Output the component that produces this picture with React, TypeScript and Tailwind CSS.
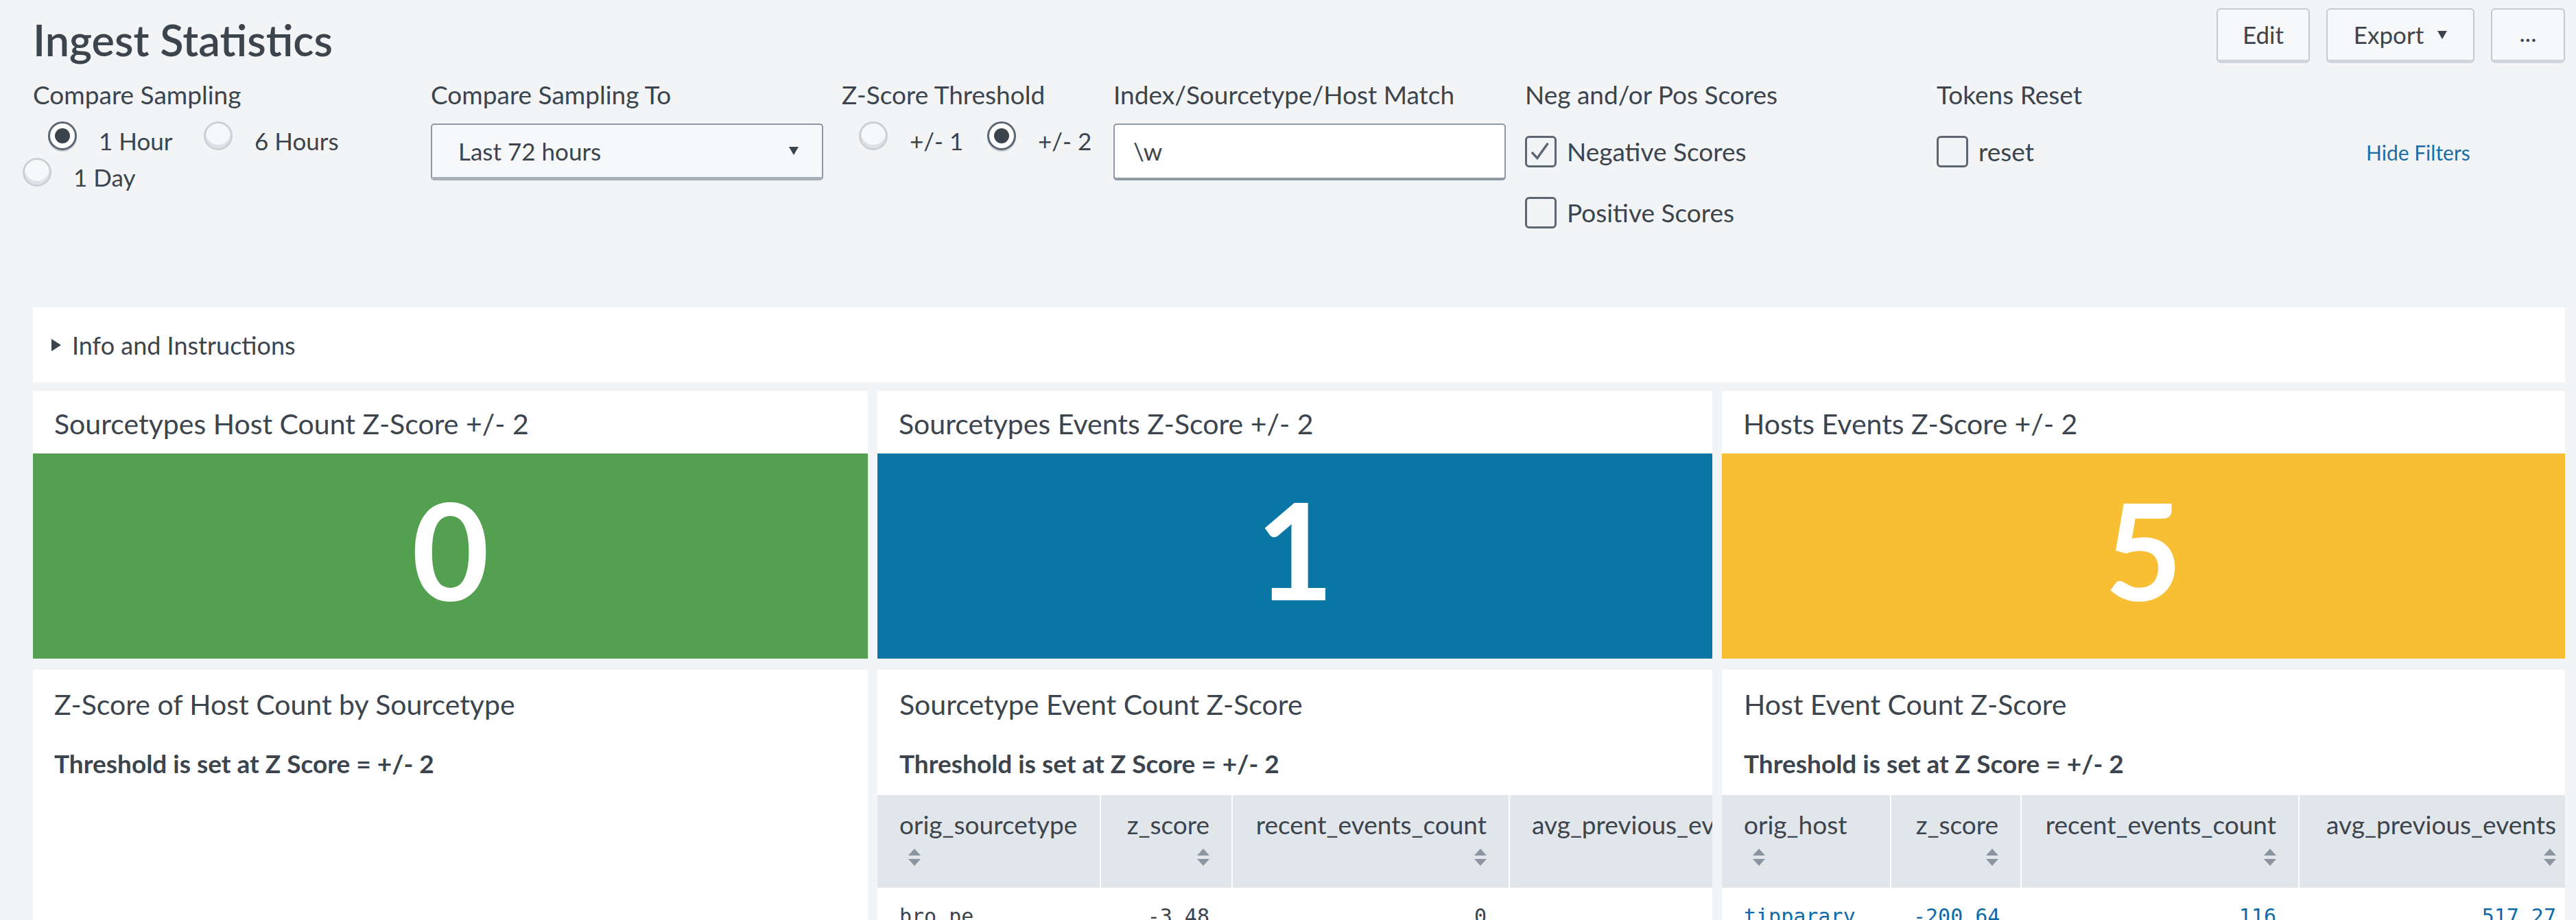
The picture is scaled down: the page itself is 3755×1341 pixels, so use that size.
import React from "react";

const Caret = ({ className = "" }: { className?: string }) => (
  <svg viewBox="0 0 14 12" className={`h-[12px] w-[14px] ${className}`}>
    <path d="M0 0 L14 0 L7 12 Z" fill="#3c444d" />
  </svg>
);

const SortIcon = () => (
  <svg viewBox="0 0 18 26" className="h-[26px] w-[18px]">
    <path d="M9 0 L18 10 L0 10 Z" fill="#8a95a1" />
    <path d="M0 15 L18 15 L9 25 Z" fill="#8a95a1" />
  </svg>
);

const Radio = ({ checked }: { checked?: boolean }) =>
  checked ? (
    <span className="flex h-[42px] w-[42px] shrink-0 items-center justify-center rounded-full border-[3px] border-[#5c6773] bg-white shadow-[0_2px_0_#c3cbd4]">
      <span className="h-[22px] w-[22px] rounded-full bg-[#3c444d]" />
    </span>
  ) : (
    <span className="h-[42px] w-[42px] shrink-0 rounded-full border-[3px] border-[#c9d0d8] bg-[#f7f8fa] shadow-[inset_0_-5px_0_#dde2e7]" />
  );

const RadioItem = ({
  label,
  checked,
  className = "",
}: {
  label: string;
  checked?: boolean;
  className?: string;
}) => (
  <div className={`flex items-start ${className}`}>
    <Radio checked={checked} />
    <span className="ml-[32px] mt-[8px] text-[35px] leading-[40px]">{label}</span>
  </div>
);

const Checkbox = ({ label, checked }: { label: string; checked?: boolean }) => (
  <div className="flex items-center">
    <span className="flex h-[46px] w-[46px] shrink-0 items-center justify-center rounded-[6px] border-[3px] border-[#5c6773] bg-transparent">
      {checked && (
        <svg viewBox="0 0 46 46" className="h-[46px] w-[46px]">
          <polyline points="8,24 17,34 35,9" fill="none" stroke="#5c6773" strokeWidth="4" />
        </svg>
      )}
    </span>
    <span className="ml-[15px] text-[37px] leading-[46px]">{label}</span>
  </div>
);

const FieldLabel = ({ children }: { children: React.ReactNode }) => (
  <div className="h-[40px] whitespace-nowrap text-[37px] leading-[40px]">{children}</div>
);

const Button = ({ children, className = "" }: { children: React.ReactNode; className?: string }) => (
  <div
    className={`flex h-[80px] items-center justify-center rounded-[6px] border-2 border-b-[5px] border-[#c3cbd4] border-b-[#cfd5dc] bg-[#f7f8fa] text-[35px] ${className}`}
  >
    {children}
  </div>
);

const SingleValue = ({ title, value, color }: { title: string; value: string; color: string }) => (
  <div className="flex flex-col bg-white">
    <div className="flex h-[91px] items-center px-[31px] pt-[4px] text-[41px]">{title}</div>
    <div className={`flex h-[299px] items-center justify-center pb-[20px] ${color}`}>
      <span className="text-[195px] font-bold leading-none text-white">{value}</span>
    </div>
  </div>
);

type Col = { name: string; w: string; align: "left" | "right"; sort: boolean };

const TablePanel = ({
  title,
  cols,
  row,
  rowColor,
}: {
  title: string;
  cols: Col[];
  row: string[];
  rowColor: string;
}) => (
  <div className="flex h-[400px] flex-col overflow-hidden bg-white">
    <div className="flex h-[102px] shrink-0 items-center px-[32px] text-[41px]">{title}</div>
    <div className="flex h-[70px] shrink-0 items-center px-[32px] text-[37px] font-bold">
      Threshold is set at Z Score = +/- 2
    </div>
    <div className="mt-[11px] flex w-max bg-[#e1e6eb]">
      {cols.map((c, i) => (
        <div
          key={c.name}
          className={`flex h-[135px] shrink-0 flex-col px-[32px] pt-[23px] ${c.w} ${
            i > 0 ? "border-l-2 border-white" : ""
          } ${c.align === "right" ? "items-end" : "items-start"}`}
        >
          <span className="whitespace-nowrap text-[37px] leading-[40px]">{c.name}</span>
          {c.sort && (
            <span className={`mt-[15px] ${c.align === "left" ? "ml-[13px]" : ""}`}>
              <SortIcon />
            </span>
          )}
        </div>
      ))}
    </div>
    <div className={`flex w-max font-['DejaVu_Sans_Mono',monospace] ${rowColor}`}>
      {cols.map((c, i) => (
        <div
          key={c.name}
          className={`shrink-0 px-[32px] pt-[22px] text-[30px] leading-[40px] ${c.w} ${i > 0 ? "border-l-2 border-transparent" : ""} ${
            c.align === "right" ? "text-right" : "text-left"
          }`}
        >
          {row[i]}
        </div>
      ))}
    </div>
  </div>
);

export default function App() {
  return (
    <div className="h-[1341px] w-[3755px] overflow-hidden bg-[#f2f4f5] pl-[48px] pr-[16px] font-[Lato,sans-serif] text-[#3c444d]">
      {/* header */}
      <div className="flex h-[92px] items-start justify-between pt-[12px]">
        <h1 className="mt-[6px] text-[63px] font-semibold leading-[80px]">Ingest Statistics</h1>
        <div className="flex gap-[24px]">
          <Button className="w-[136px]">Edit</Button>
          <Button className="w-[216px] gap-[20px]">
            <span>Export</span>
            <Caret />
          </Button>
          <Button className="w-[108px] items-end pb-[14px]">...</Button>
        </div>
      </div>

      {/* filters */}
      <div className="mt-[26px] flex h-[330px] items-start">
        <div className="w-[580px] shrink-0">
          <FieldLabel>Compare Sampling</FieldLabel>
          <div className="mt-[19px] flex">
            <RadioItem label="1 Hour" checked className="ml-[22px] w-[227px]" />
            <RadioItem label="6 Hours" />
          </div>
          <div className="mt-[5px] flex">
            <RadioItem label="1 Day" className="ml-[-15px]" />
          </div>
        </div>

        <div className="w-[599px] shrink-0">
          <FieldLabel>Compare Sampling To</FieldLabel>
          <div className="mt-[22px] flex h-[83px] w-[572px] items-center justify-between rounded-[5px] border-2 border-b-[5px] border-[#8e99a5] border-b-[#a7b0ba] bg-[#f7f8fa] pl-[38px] pr-[34px] text-[35px]">
            <span>Last 72 hours</span>
            <Caret />
          </div>
        </div>

        <div className="w-[396px] shrink-0">
          <FieldLabel>Z-Score Threshold</FieldLabel>
          <div className="mt-[19px] flex">
            <RadioItem label="+/- 1" className="ml-[25px] w-[187px]" />
            <RadioItem label="+/- 2" checked />
          </div>
        </div>

        <div className="w-[600px] shrink-0">
          <FieldLabel>Index/Sourcetype/Host Match</FieldLabel>
          <div className="mt-[22px] flex h-[83px] w-[572px] items-center rounded-[5px] border-2 border-b-[4px] border-[#8e99a5] bg-white pl-[27px] text-[35px]">
            \w
          </div>
        </div>

        <div className="w-[600px] shrink-0">
          <FieldLabel>Neg and/or Pos Scores</FieldLabel>
          <div className="mt-[40px]">
            <Checkbox label="Negative Scores" checked />
          </div>
          <div className="mt-[43px]">
            <Checkbox label="Positive Scores" />
          </div>
        </div>

        <div className="w-[626px] shrink-0">
          <FieldLabel>Tokens Reset</FieldLabel>
          <div className="mt-[40px]">
            <Checkbox label="reset" />
          </div>
        </div>

        <div className="mt-[84px] text-[30px] leading-[40px] text-[#1a6ea3]">Hide Filters</div>
      </div>

      {/* info */}
      <div className="flex h-[109px] items-center bg-white pl-[27px]">
        <svg viewBox="0 0 14 18" className="h-[18px] w-[14px]">
          <path d="M0 0 L14 9 L0 18 Z" fill="#3c444d" />
        </svg>
        <span className="ml-[16px] text-[36px]">Info and Instructions</span>
      </div>

      {/* single values */}
      <div className="mt-[13px] grid grid-cols-[1217px_1217px_1fr] gap-[14px]">
        <SingleValue title="Sourcetypes Host Count Z-Score +/- 2" value="0" color="bg-[#53a051]" />
        <SingleValue title="Sourcetypes Events Z-Score +/- 2" value="1" color="bg-[#0a76a6]" />
        <SingleValue title="Hosts Events Z-Score +/- 2" value="5" color="bg-[#f8be34]" />
      </div>

      {/* tables */}
      <div className="mt-[16px] grid grid-cols-[1217px_1217px_1fr] gap-[14px]">
        <div className="flex h-[400px] flex-col bg-white">
          <div className="flex h-[102px] items-center px-[31px] text-[41px]">
            Z-Score of Host Count by Sourcetype
          </div>
          <div className="flex h-[70px] items-center px-[31px] text-[37px] font-bold">
            Threshold is set at Z Score = +/- 2
          </div>
        </div>
        <TablePanel
          title="Sourcetype Event Count Z-Score"
          rowColor="text-[#3c444d]"
          cols={[
            { name: "orig_sourcetype", w: "w-[324px]", align: "left", sort: true },
            { name: "z_score", w: "w-[192px]", align: "right", sort: true },
            { name: "recent_events_count", w: "w-[404px]", align: "right", sort: true },
            { name: "avg_previous_events", w: "w-[442px]", align: "left", sort: false },
          ]}
          row={["bro_pe", "-3.48", "0", ""]}
        />
        <TablePanel
          title="Host Event Count Z-Score"
          rowColor="text-[#0e6ba8]"
          cols={[
            { name: "orig_host", w: "w-[245px]", align: "left", sort: true },
            { name: "z_score", w: "w-[190px]", align: "right", sort: true },
            { name: "recent_events_count", w: "w-[405px]", align: "right", sort: true },
            { name: "avg_previous_events", w: "w-[408px]", align: "right", sort: true },
          ]}
          row={["tipparary", "-200.64", "116", "517.27"]}
        />
      </div>
    </div>
  );
}
